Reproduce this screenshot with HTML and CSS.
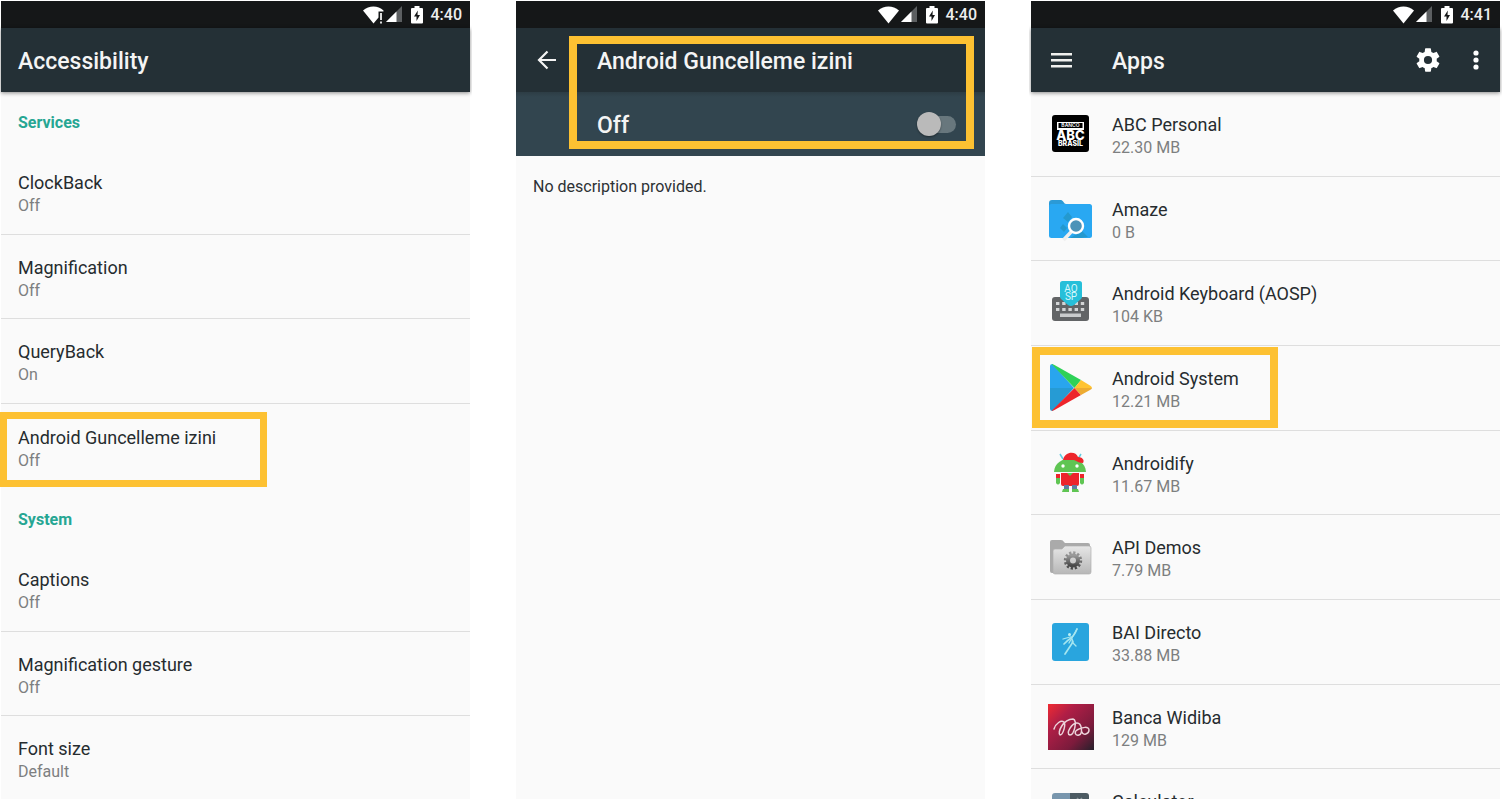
FILE: index.html
```html
<!DOCTYPE html>
<html lang="en">
<head>
<meta charset="utf-8">
<title>Accessibility and Apps</title>
<link rel="stylesheet" href="styles.css">
</head>
<body>
<svg class="sprite" aria-hidden="true">
  <symbol id="wifi" viewBox="0 0 21 18"><path fill="#fff" d="M10.500 17.500L0 4.500C6-.8 15-.8 21 4.500z"/></symbol>
  <symbol id="wifi-alert" viewBox="0 0 21 18"><path fill="#fff" d="M10.500 17.500L0 4.500C6-.8 15-.8 20.500 4.500V5.500H15.500V11.500z"/><path fill="#ddd" d="M17 7h2v7h-2zM17 15.500h2v2h-2z"/></symbol>
  <symbol id="signal" viewBox="0 0 17 17"><path fill="#5c5f61" d="M16 0v16H0z"/><path fill="#fff" d="M10.500 5.500V16H0z"/></symbol>
  <symbol id="battery" viewBox="0 0 12 18"><path fill="#fff" d="M3.500 0h5v2H11a1 1 0 0 1 1 1v13.500a1 1 0 0 1-1 1H1a1 1 0 0 1-1-1V3a1 1 0 0 1 1-1h2.500z"/><path fill="#151718" d="M6.800 4.500L3 10.500h2.500V15L9 9H6.500z"/></symbol>
</svg>
<main class="screens">
  <section class="phone">
    <div class="status">
      <svg class="wifi"><use href="#wifi-alert"/></svg><svg class="signal"><use href="#signal"/></svg><svg class="battery"><use href="#battery"/></svg><span class="clock">4:40</span>
    </div>
    <header class="appbar raised"><h1>Accessibility</h1></header>
    <h2 class="group">Services</h2>
    <ul class="list">
      <li><a class="row" href="#"><span class="title">ClockBack</span><span class="sub">Off</span></a></li>
      <li><a class="row" href="#"><span class="title">Magnification</span><span class="sub">Off</span></a></li>
      <li><a class="row" href="#"><span class="title">QueryBack</span><span class="sub">On</span></a></li>
      <li class="last marked mark-service"><a class="row" href="#"><span class="title">Android Guncelleme izini</span><span class="sub">Off</span></a></li>
    </ul>
    <h2 class="group">System</h2>
    <ul class="list">
      <li><a class="row" href="#"><span class="title">Captions</span><span class="sub">Off</span></a></li>
      <li><a class="row" href="#"><span class="title">Magnification gesture</span><span class="sub">Off</span></a></li>
      <li><a class="row" href="#"><span class="title">Font size</span><span class="sub">Default</span></a></li>
    </ul>
  </section>

  <section class="phone">
    <div class="status">
      <svg class="wifi"><use href="#wifi"/></svg><svg class="signal"><use href="#signal"/></svg><svg class="battery"><use href="#battery"/></svg><span class="clock">4:40</span>
    </div>
    <div class="marked mark-switch">
      <header class="appbar">
        <button class="nav" aria-label="Back"><svg width="28" height="28" viewBox="0 0 28 28" fill="none" stroke="#f4f4f4" stroke-width="2.200"><path d="M23 14H6M14.500 5.500L6 14l8.500 8.500"/></svg></button>
        <h1>Android Guncelleme izini</h1>
      </header>
      <div class="switchbar">
        <label for="service">Off</label>
        <input class="toggle" type="checkbox" role="switch" id="service">
      </div>
    </div>
    <p class="description">No description provided.</p>
  </section>

  <section class="phone">
    <div class="status">
      <svg class="wifi"><use href="#wifi"/></svg><svg class="signal"><use href="#signal"/></svg><svg class="battery"><use href="#battery"/></svg><span class="clock">4:41</span>
    </div>
    <header class="appbar raised">
      <button class="nav" aria-label="Menu"><svg width="28" height="28" viewBox="0 0 28 28" fill="#f0f0ee"><path d="M3 7h21v2.400H3zM3 13h21v2.400H3zM3 19h21v2.400H3z"/></svg></button>
      <h1>Apps</h1>
      <button class="action" aria-label="Settings"><svg width="28" height="28" viewBox="0 0 24 24" fill="#fff"><path d="M19.430 12.980c.04-.32.07-.64.07-.98s-.03-.66-.07-.98l2.110-1.650c.19-.15.24-.42.12-.64l-2-3.460c-.12-.22-.39-.3-.61-.22l-2.490 1c-.52-.4-1.080-.73-1.690-.98l-.38-2.650C14.460 2.180 14.250 2 14 2h-4c-.25 0-.46.18-.49.42l-.38 2.650c-.61.25-1.170.59-1.690.98l-2.490-1c-.23-.09-.49 0-.61.22l-2 3.460c-.13.22-.07.49.12.64l2.110 1.650c-.04.32-.07.65-.07.98s.03.66.07.98l-2.110 1.650c-.19.15-.24.42-.12.64l2 3.460c.12.22.39.3.61.22l2.490-1c.52.4 1.080.73 1.690.98l.38 2.650c.03.24.24.42.49.42h4c.25 0 .46-.18.49-.42l.38-2.650c.61-.25 1.170-.59 1.690-.98l2.490 1c.23.09.49 0 .61-.22l2-3.460c.12-.22.07-.49-.12-.64zM12 15.500a3.500 3.500 0 1 1 0-7 3.500 3.500 0 0 1 0 7z"/></svg></button>
      <button class="action more" aria-label="More options"><svg width="8" height="28" viewBox="0 0 8 28" fill="#fff"><circle cx="4" cy="7" r="2.600"/><circle cx="4" cy="14" r="2.600"/><circle cx="4" cy="21" r="2.600"/></svg></button>
    </header>
    <ul class="list">
      <li><a class="row app" href="#">
        <svg class="icon" viewBox="0 0 48 48"><rect x="6" y="5" width="37" height="37" rx="3" fill="#000"/><path fill="#fff" d="M11 12h27v15H11z"/><path fill="#000" d="M12.500 13h24v5h-24zM11 20h27v10H11z"/><g font-family="Inter, sans-serif" text-anchor="middle" fill="#fff"><text x="24.500" y="17.300" font-size="5" font-weight="600">BANCO</text><text x="24.500" y="29.500" font-size="13" font-weight="800">ABC</text><text x="24.500" y="35.800" font-size="7" font-weight="800">BRASIL</text></g></svg>
        <span class="title">ABC Personal</span><span class="sub">22.30 MB</span></a></li>
      <li><a class="row app" href="#">
        <svg class="icon" viewBox="0 0 48 48"><path fill="#2b9ad6" d="M3 8a3 3 0 0 1 3-3h9c2 0 3 4 5 4v8H3z"/><rect x="3" y="9" width="43" height="34" rx="2.500" fill="#29a8f2"/><path fill="#2499cf" d="M22 17l4 5-4 5-5-4zM17 29l4 4-3 4-4-4zM36 36l6 6-7 1H24z"/><path d="M26 36l-8.500 9" stroke="#eee" stroke-width="3.500"/><circle cx="30" cy="31" r="7" fill="#4b93b8" stroke="#fff" stroke-width="2.400"/></svg>
        <span class="title">Amaze</span><span class="sub">0 B</span></a></li>
      <li><a class="row app" href="#">
        <svg class="icon" viewBox="0 0 48 48"><rect x="6" y="18" width="37" height="24" rx="3" fill="#626466"/><path stroke="#d3d5d6" stroke-width="3.200" stroke-dasharray="3.400 2.800" d="M10 24.500h29M10 30.500h29"/><path fill="#c9cbcc" d="M14 34.500h21v3.500H14z"/><path fill="#26bfd9" d="M16.500 2h17a2.500 2.500 0 0 1 2.500 2.500V18a3 3 0 0 1-1 2l-7 6q-3 2-6 0l-7-6a3 3 0 0 1-1-2V4.500A2.500 2.500 0 0 1 16.500 2z"/><g font-family="Roboto, sans-serif" font-size="10" fill="#d8f8fc" text-anchor="middle"><text x="25" y="12.500">AO</text><text x="25" y="21">SP</text></g></svg>
        <span class="title">Android Keyboard (AOSP)</span><span class="sub">104 KB</span></a></li>
      <li class="marked mark-app"><a class="row app" href="#">
        <svg class="icon" viewBox="0 0 48 48"><path fill="#29a5ee" d="M4 24V2q0-2 2.500-2L28 24z"/><path fill="#269bd4" d="M4 24v21q0 2 2.500 2L28 24z"/><path fill="#2ed158" d="M5.500 0q1 0 3 1L35 16l-6.500 8z"/><path fill="#ed252b" d="M5.500 47q1 0 3-1L35 31l-6.500-7z"/><path fill="#ffc331" d="M28.500 24L35 16l9 5.500q2 1 2 2.500z"/><path fill="#edab31" d="M28.500 24L35 31l9-5q2-1 2-2z"/></svg>
        <span class="title">Android System</span><span class="sub">12.21 MB</span></a></li>
      <li><a class="row app" href="#">
        <svg class="icon" viewBox="0 0 48 48"><path d="M14 5l3 5M35 5l-3 5" stroke="#60cce0" stroke-width="1.500"/><path fill="#5fc553" d="M8 23C9 5 39 5 40 23z"/><path fill="#ed252b" d="M17 11c2-9 13-9 15-3 4 0 7 3 5 6-4 0-6-2-9-3z"/><circle cx="17" cy="17" r="1.700" fill="#fff"/><circle cx="31" cy="17" r="1.700" fill="#fff"/><path fill="#ed252b" d="M15 24h18v11a2 2 0 0 1-2 2H17a2 2 0 0 1-2-2zM10 25h4v4h-4zM34 25h4v4h-4z"/><path fill="#5fc553" d="M10 29h4v5q-2 3-4 0zM34 29h4v5q-2 3-4 0zM17 40h6v3h-7zM26 40h6l1 3h-7z"/><path fill="#607ea0" d="M18 36h5v4h-5zM26 36h5v4h-5z"/><path fill="#5fc553" d="M21 24h6l-3 3z"/></svg>
        <span class="title">Androidify</span><span class="sub">11.67 MB</span></a></li>
      <li><a class="row app" href="#">
        <svg class="icon" viewBox="0 0 48 48"><defs><linearGradient id="folder" x2="0" y2="1"><stop stop-color="#e6e6e6"/><stop offset="1" stop-color="#b7b7b7"/></linearGradient><linearGradient id="cog" x2="0" y2="1"><stop stop-color="#999"/><stop offset="1" stop-color="#494949"/></linearGradient></defs><path fill="#aaa" d="M4 9a2 2 0 0 1 2-2h9q2 0 3 2l1 1h23a2 2 0 0 1 2 2v28H6a2 2 0 0 1-2-2z"/><path fill="url(#folder)" stroke="#b0b0b0" stroke-width=".7" d="M7 18q0-2 2-2h7l3-3h24q2 0 2 2v24q0 2-2 2H9q-2 0-2-2z"/><circle cx="27" cy="27.500" r="7.700" fill="none" stroke="url(#cog)" stroke-width="3" stroke-dasharray="2.200 1.830"/><circle cx="27" cy="27.500" r="5" fill="none" stroke="url(#cog)" stroke-width="4"/></svg>
        <span class="title">API Demos</span><span class="sub">7.79 MB</span></a></li>
      <li><a class="row app" href="#">
        <svg class="icon" viewBox="0 0 48 48"><rect x="6" y="5" width="37" height="38" rx="3" fill="#29a5de"/><g fill="none" stroke="#a5e6f0" stroke-linecap="round"><path stroke-width="1.700" d="M31 11q-3 7-6 9t-7 6M25 19l2 5q-4 6-8 12"/><path stroke-width="1.300" d="M17 21l7-2M26 24l4 4M31 11l-8 14"/></g><circle cx="23.500" cy="16.500" r="1.500" fill="#bdf0f3"/></svg>
        <span class="title">BAI Directo</span><span class="sub">33.88 MB</span></a></li>
      <li><a class="row app" href="#">
        <svg class="icon" viewBox="0 0 48 48"><defs><linearGradient id="wine" x2="1" y2="1"><stop stop-color="#f02b32"/><stop offset=".3" stop-color="#b01e46"/><stop offset=".7" stop-color="#7c1b3c"/><stop offset="1" stop-color="#25202b"/></linearGradient></defs><path fill="url(#wine)" d="M2 1h46v46H2z"/><path fill="none" stroke="#ecd3da" stroke-width="1.500" stroke-linecap="round" stroke-linejoin="round" d="M8 26C10 20 15 17 18 19C20 22 17 32 14 32C11 30 17 16 27 16C32 17 28 32 24 32C19 31 26 20 31 20C36 20 37 31 33 32C29 33 28 29 31 27C36 24 43 23 43 27C43 31 37 33 36 29"/></svg>
        <span class="title">Banca Widiba</span><span class="sub">129 MB</span></a></li>
      <li><a class="row app" href="#">
        <svg class="icon" viewBox="0 0 48 48"><path fill="#7896ad" d="M9 6h16v37H6V9a3 3 0 0 1 3-3z"/><path fill="#4d5b63" d="M24 6h16a3 3 0 0 1 3 3v34H24z"/><path stroke="#8d979c" stroke-width="1.500" d="M31 11l5 5M36 11l-5 5"/></svg>
        <span class="title">Calculator</span></a></li>
    </ul>
  </section>
</main>
</body>
</html>
```
FILE: styles.css
```css
*, *::before, *::after { box-sizing: border-box; }
body { margin: 0; background: #fff; font-family: Roboto, sans-serif; }
h1, h2, p, ul { margin: 0; padding: 0; }
ul { list-style: none; }
button { border: 0; padding: 0; background: none; display: flex; }
.sprite { display: none; }

.screens {
  display: grid;
  grid-template-columns: repeat(3, 1fr);
  grid-template-rows: minmax(0, 1fr);
  gap: 46px;
  height: 100vh;
  overflow: hidden;
  padding: 1px 4px 5px 1px;
}
.phone { background: #fafafa; clip-path: inset(0 -2px); min-width: 0; }

.status {
  height: 27px;
  padding-right: 8px;
  display: flex;
  align-items: center;
  justify-content: flex-end;
  background: #151718;
  color: #eee;
}
.wifi { width: 21px; height: 18px; margin-right: 2px; }
.signal { width: 17px; height: 17px; margin-right: 8px; }
.battery { width: 12px; height: 18px; margin-right: 8px; }
.clock { font-size: 16px; font-weight: 500; line-height: 28px; }

.appbar {
  height: 64px;
  padding: 0 17px;
  display: flex;
  align-items: center;
  background: #243036;
  color: #f4f4f4;
}
.raised { position: relative; box-shadow: 0 1px 4px rgba(0, 0, 0, .45); }
.appbar h1 { flex: 1; padding-top: 4px; font-size: 23px; font-weight: 500; line-height: 28px; }
.nav { width: 64px; }
.action { margin-right: 30px; }
.more { margin-right: 3px; }

.group {
  height: 58px;
  padding: 2px 17px 0;
  font-size: 16px;
  font-weight: 700;
  line-height: 58px;
  color: #26a693;
}

.list {
  display: grid;
  grid-auto-rows: 85px 84px 85px;
}
.list li { border-bottom: 1px solid #dedede; }
.list .last { border-bottom: 0; }
.row {
  height: 100%;
  padding: 4px 17px 0;
  display: grid;
  align-content: center;
  grid-auto-rows: 23px;
  line-height: 23px;
  color: #262c2f;
  text-decoration: none;
}
.title { font-size: 18px; }
.sub { font-size: 16px; color: #7d7f80; }
.app {
  padding-left: 15px;
  grid-template-columns: 48px 1fr;
  grid-template-rows: 23px 23px;
  column-gap: 18px;
}
.icon { width: 48px; height: 48px; margin-top: -4px; grid-row: span 2; align-self: center; }

.switchbar {
  height: 64px;
  padding: 0 29px 0 81px;
  display: flex;
  align-items: center;
  justify-content: space-between;
  background: linear-gradient(#2d3d45, #32454f 5px);
  color: #f4f4f4;
  font-size: 23px;
  font-weight: 500;
}
.switchbar label { padding-top: 3px; }
.toggle {
  appearance: none;
  position: relative;
  width: 34px;
  height: 17px;
  margin: 0;
  border-radius: 9px;
  background: #68777d;
}
.toggle::before {
  content: "";
  position: absolute;
  left: -5px;
  top: -4px;
  width: 24px;
  height: 24px;
  border-radius: 50%;
  background: #bababa;
  box-shadow: 0 1px 2px rgba(0, 0, 0, .4);
}
.description { padding: 19px 17px; font-size: 16px; line-height: 24px; color: #2c3134; }

.marked { position: relative; }
.marked::after {
  content: "";
  position: absolute;
  border: 8px solid #fdc132;
  pointer-events: none;
}
.mark-service::after { left: -1px; top: 8px; width: 267px; height: 75px; border-width: 7px; }
.mark-switch::after { left: 53px; right: 11px; top: 8px; bottom: 7px; }
.mark-app::after { left: 1px; top: 1px; width: 246px; height: 81px; }
```
